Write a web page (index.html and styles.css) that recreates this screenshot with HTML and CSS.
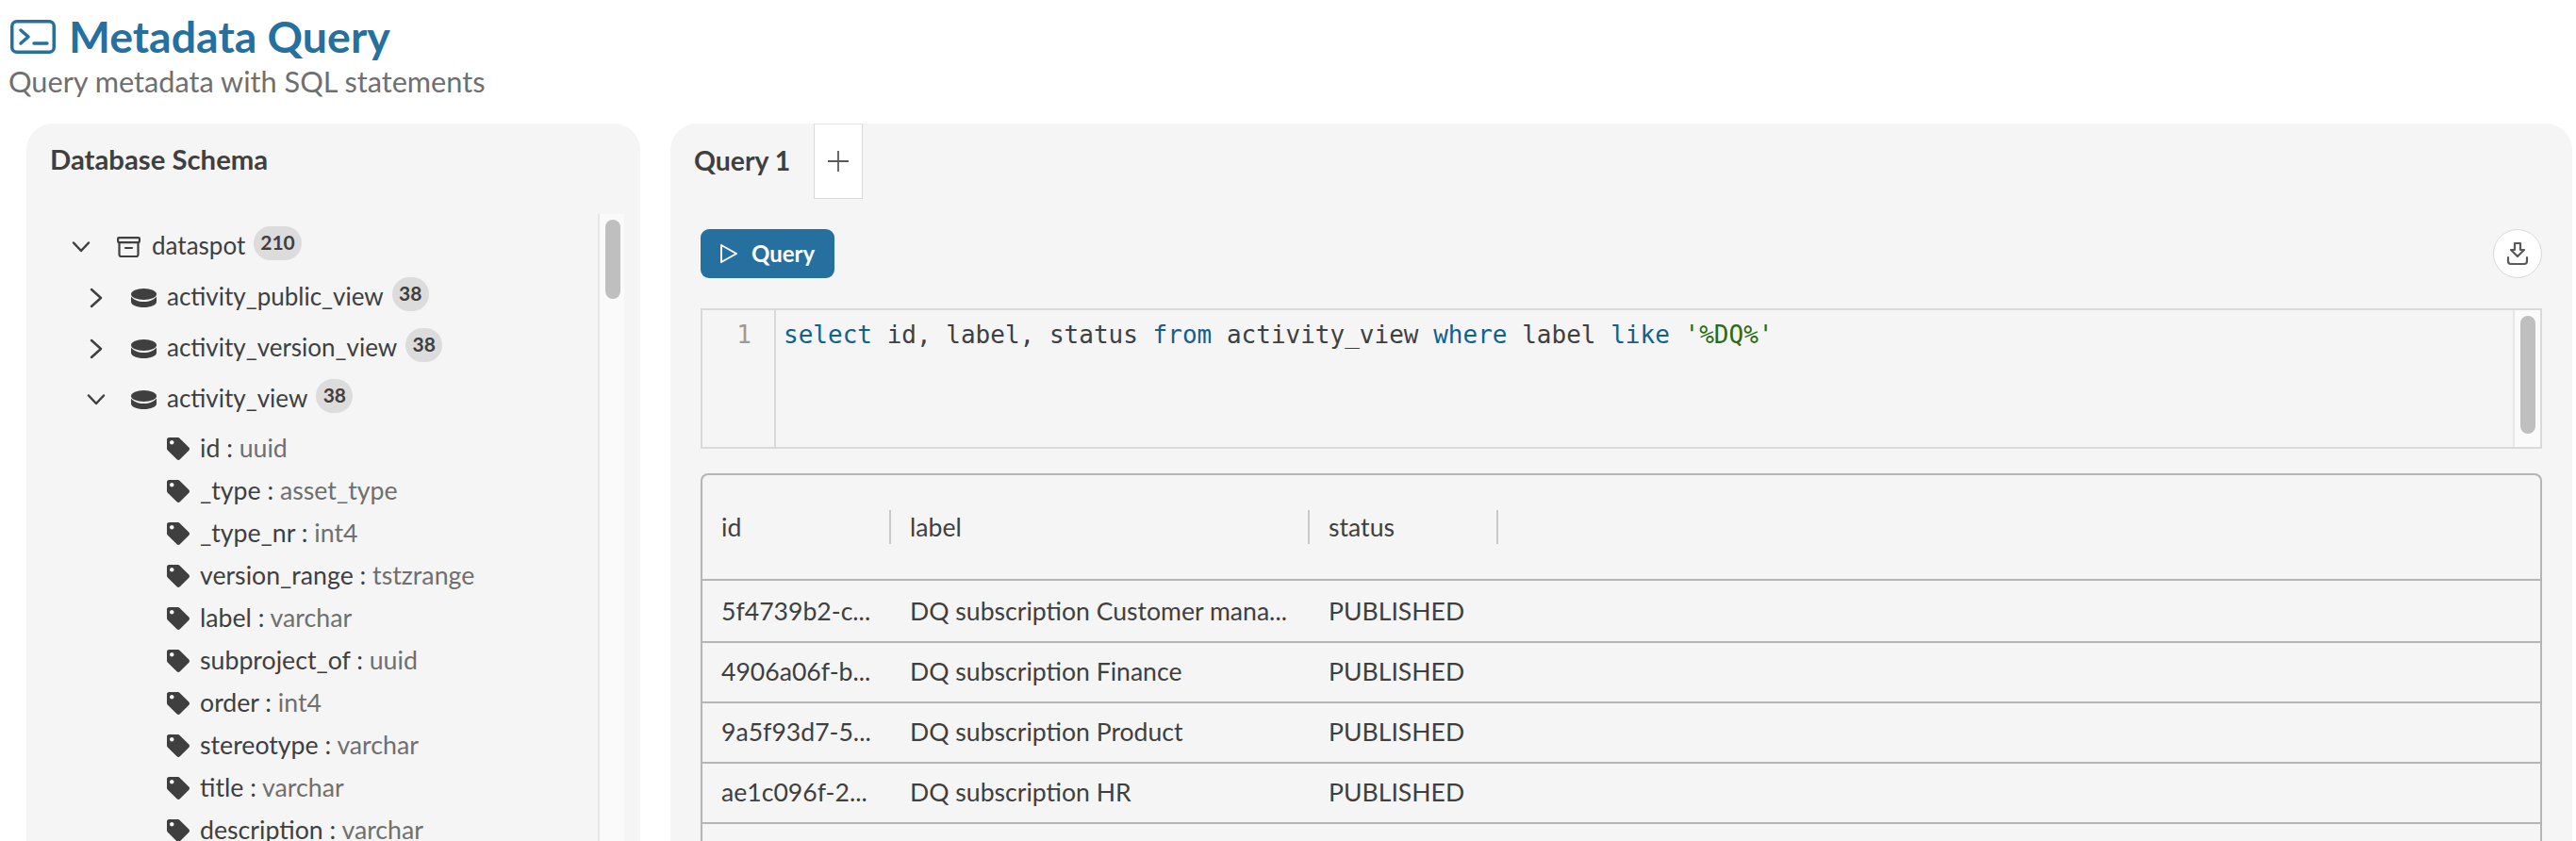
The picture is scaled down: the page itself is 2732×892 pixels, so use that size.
FILE: index.html
```html
<!DOCTYPE html>
<html lang="en">
<head>
<meta charset="utf-8">
<title>Metadata Query</title>
<link rel="stylesheet" href="styles.css">
</head>
<body>
<svg class="defs" width="0" height="0" aria-hidden="true">
  <symbol id="tag" viewBox="0 0 512 512"><path d="M0 252.118V48C0 21.49 21.49 0 48 0h204.118a48 48 0 0 1 33.941 14.059l211.882 211.882c18.745 18.745 18.745 49.137 0 67.882L293.823 497.941c-18.745 18.745-49.137 18.745-67.882 0L14.059 286.059A48 48 0 0 1 0 252.118zM112 64c-26.51 0-48 21.49-48 48s21.49 48 48 48 48-21.49 48-48-21.49-48-48-48z"/></symbol>
  <symbol id="db" viewBox="0 0 27 20"><ellipse cx="13.5" cy="6" rx="13.5" ry="6"/><path d="M0 8.5C2.5 12 7.500 14 13.500 14S24.500 12 27 8.500V14C27 17.500 21 20 13.500 20S0 17.500 0 14Z"/></symbol>
  <symbol id="right" viewBox="0 0 20 24"><path d="M5 3l10 9-10 9" fill="none" stroke="currentColor" stroke-width="2.500" stroke-linecap="round" stroke-linejoin="round"/></symbol>
  <symbol id="down" viewBox="0 0 20 20"><path d="M2 5.500l8 8.500 8-8.500" fill="none" stroke="currentColor" stroke-width="2.500" stroke-linecap="round" stroke-linejoin="round"/></symbol>
</svg>
<header class="page-head">
  <h1 class="page-title">
    <svg class="title-icon" viewBox="0 0 48 36" fill="none" stroke="currentColor" stroke-width="3.500" stroke-linecap="round" stroke-linejoin="round"><rect x="1.750" y="1.750" width="44.500" height="32.500" rx="5"/><path d="M11 11l8 7-8 7M25 25h14"/></svg>
    Metadata Query
  </h1>
  <p class="page-sub">Query metadata with SQL statements</p>
</header>
<main class="panels">
  <section class="schema">
    <h2 class="schema-title">Database Schema</h2>
    <div class="tree-wrap">
      <div class="tree">
        <div class="node">
          <svg class="chev"><use href="#down"/></svg>
          <svg class="archive" viewBox="0 0 25 22" fill="none" stroke="currentColor" stroke-width="2.200" stroke-linecap="round" stroke-linejoin="round"><rect x="1.100" y="1.100" width="22.800" height="5" rx="1"/><path d="M2.500 6.100V19a2 2 0 0 0 2 2h16a2 2 0 0 0 2-2V6.100M9 12h7"/></svg>
          <span class="node-name">dataspot</span><span class="badge">210</span>
        </div>
        <div class="node lvl1">
          <svg class="chev"><use href="#right"/></svg>
          <svg class="dbicon"><use href="#db"/></svg>
          <span class="node-name">activity_public_view</span><span class="badge">38</span>
        </div>
        <div class="node lvl1">
          <svg class="chev"><use href="#right"/></svg>
          <svg class="dbicon"><use href="#db"/></svg>
          <span class="node-name">activity_version_view</span><span class="badge">38</span>
        </div>
        <div class="node lvl1">
          <svg class="chev"><use href="#down"/></svg>
          <svg class="dbicon"><use href="#db"/></svg>
          <span class="node-name">activity_view</span><span class="badge">38</span>
        </div>
        <ul class="cols">
          <li class="col"><svg class="tag"><use href="#tag"/></svg><span>id : <em>uuid</em></span></li>
          <li class="col"><svg class="tag"><use href="#tag"/></svg><span>_type : <em>asset_type</em></span></li>
          <li class="col"><svg class="tag"><use href="#tag"/></svg><span>_type_nr : <em>int4</em></span></li>
          <li class="col"><svg class="tag"><use href="#tag"/></svg><span>version_range : <em>tstzrange</em></span></li>
          <li class="col"><svg class="tag"><use href="#tag"/></svg><span>label : <em>varchar</em></span></li>
          <li class="col"><svg class="tag"><use href="#tag"/></svg><span>subproject_of : <em>uuid</em></span></li>
          <li class="col"><svg class="tag"><use href="#tag"/></svg><span>order : <em>int4</em></span></li>
          <li class="col"><svg class="tag"><use href="#tag"/></svg><span>stereotype : <em>varchar</em></span></li>
          <li class="col"><svg class="tag"><use href="#tag"/></svg><span>title : <em>varchar</em></span></li>
          <li class="col"><svg class="tag"><use href="#tag"/></svg><span>description : <em>varchar</em></span></li>
        </ul>
      </div>
      <div class="scroll-track"><div class="scroll-thumb"></div></div>
    </div>
  </section>
  <section class="workspace">
    <div class="tabs">
      <div class="tab">Query 1</div>
      <div class="tab-add"><svg viewBox="0 0 22 22" width="22" height="22" fill="none" stroke="#595959" stroke-width="1.800"><path d="M11 0v22M0 11h22"/></svg></div>
    </div>
    <div class="body">
      <div class="toolbar">
        <button class="run"><svg viewBox="0 0 20 22" width="20" height="22" fill="none" stroke="#fff" stroke-width="2" stroke-linejoin="round"><path d="M2 2l16 9-16 9z"/></svg><span class="run-label">Query</span></button>
        <button class="dl"><svg viewBox="0 0 24 26" width="24" height="26" fill="none" stroke="#595959" stroke-width="2.200" stroke-linecap="round" stroke-linejoin="round"><path d="M9 2h6v7h4l-7 7-7-7h4zM2 17v4a3 3 0 0 0 3 3h14a3 3 0 0 0 3-3v-4"/></svg></button>
      </div>
      <div class="editor">
        <div class="gutter">1</div>
        <pre class="code"><span class="kw">select</span> id, label, status <span class="kw">from</span> activity_view <span class="kw">where</span> label <span class="kw">like</span> <span class="str">'%DQ%'</span></pre>
        <div class="ed-track"><div class="ed-thumb"></div></div>
      </div>
      <div class="results">
        <table class="grid">
          <colgroup><col class="c1"><col class="c2"><col class="c3"><col></colgroup>
          <thead><tr><th>id</th><th>label</th><th>status</th><th class="rest"></th></tr></thead>
          <tbody>
            <tr class="first"><td>5f4739b2-c...</td><td>DQ subscription Customer mana...</td><td>PUBLISHED</td><td></td></tr>
            <tr><td>4906a06f-b...</td><td>DQ subscription Finance</td><td>PUBLISHED</td><td></td></tr>
            <tr><td>9a5f93d7-5...</td><td>DQ subscription Product</td><td>PUBLISHED</td><td></td></tr>
            <tr><td>ae1c096f-2...</td><td>DQ subscription HR</td><td>PUBLISHED</td><td></td></tr>
          </tbody>
        </table>
      </div>
    </div>
  </section>
</main>
</body>
</html>
```
FILE: styles.css
```css
* { box-sizing: border-box; }
html, body { height: 892px; overflow: hidden; }
body { margin: 0; background: #fff; color: #3f3f3f; font-family: "Lato", "Noto Sans", sans-serif; }
.defs { position: absolute; }
.page-head { height: 131px; padding: 7px 0 0 9px; }
.page-title { margin: 0; display: flex; align-items: center; gap: 14px; height: 62px; font-size: 46.5px; line-height: 60px; font-weight: 700; color: #26709f; }
.title-icon { width: 48px; height: 36px; margin: 2px 0 0 2px; flex: none; }
.page-sub { margin: 0; font-size: 30.7px; line-height: 36px; color: #6f6f6f; }
.panels { display: flex; gap: 32px; padding: 0 4px 0 28px; height: 761px; }
.schema { width: 651px; flex: none; background: #f5f5f5; border-radius: 28px 28px 0 0; display: flex; flex-direction: column; }
.schema-title { margin: 0; height: 96px; padding: 21px 0 0 25px; font-size: 29.3px; line-height: 34px; font-weight: 700; color: #3f3f3f; }
.tree-wrap { display: flex; flex: 1; min-height: 0; padding-right: 17px; }
.tree { flex: 1; padding: 8px 0 0 48px; }
.scroll-track { width: 28px; flex: none; background: #fafafa; border-left: 2px solid #e6e6e6; padding: 6px 0 0 6px; }
.scroll-thumb { width: 16px; height: 84px; background: #bfbfbf; border-radius: 8px; }
.node { display: flex; height: 54px; align-items: center; font-size: 26px; }
.lvl1 { padding-left: 15px; }
.chev { width: 20px; height: 24px; margin-right: 28px; flex: none; color: #3f3f3f; }
.lvl1 .chev { transform: translateX(1px); }
.archive { width: 25px; height: 22px; margin-right: 12px; flex: none; }
.dbicon { width: 27px; height: 20px; margin-right: 11px; flex: none; fill: #3f3f3f; }
.node-name { padding-bottom: 4px; }
.badge { align-self: flex-start; margin: 5px 0 0 9px; height: 36px; min-width: 39px; padding: 0 7px; border-radius: 18px; background: #dcdcdc; font-size: 21px; font-weight: 700; line-height: 34px; text-align: center; }
.cols { list-style: none; margin: 2px 0 0; padding: 0 0 0 101px; }
.col { display: flex; align-items: center; height: 45px; font-size: 26.7px; }
.col span { padding-bottom: 1px; }
.tag { width: 24px; height: 24px; margin-right: 11px; flex: none; fill: #3f3f3f; }
.col em { font-style: normal; color: #6f6f6f; }
.workspace { flex: 1; min-width: 0; background: #f5f5f5; border-radius: 28px 28px 0 0; }
.tabs { display: flex; height: 80px; }
.tab { width: 152px; padding: 0 0 0 25px; font-size: 28.4px; font-weight: 700; line-height: 62px; height: 62px; margin-top: 8px; }
.tab-add { width: 52px; height: 80px; background: #fff; border: 1.500px solid #d9d9d9; border-top-color: #e4e4e4; display: flex; align-items: center; justify-content: center; }
.body { padding: 32px 32px 0; }
.toolbar { display: flex; justify-content: space-between; height: 52px; }
.run { width: 142px; height: 52px; background: #26709f; border: 0; border-radius: 9px; color: #fff; display: flex; align-items: center; padding: 0 0 0 20px; gap: 14px; font: 700 24px "Lato", sans-serif; }
.run-label { padding-bottom: 2px; }
.dl { width: 52px; height: 52px; border-radius: 50%; background: #fff; border: 1px solid #d9d9d9; display: flex; align-items: center; justify-content: center; padding: 0; }
.editor { display: flex; margin-top: 32px; height: 149px; border: 2px solid #d9d9d9; background: #f5f5f5; }
.gutter { width: 78px; flex: none; border-right: 2px solid #d9d9d9; font: 26px/36px "DejaVu Sans Mono", monospace; color: #9a9a9a; text-align: right; padding: 8px 24px 0 0; }
.code { margin: 0; flex: 1; padding: 8px 0 0 8px; font: 26.03px/36px "DejaVu Sans Mono", monospace; color: #3f3f3f; }
.kw { color: #0f6190; }
.str { color: #2a6a12; }
.ed-track { width: 29px; flex: none; background: #fafafa; border-left: 2px solid #e6e6e6; padding: 6px 0 0 6px; }
.ed-thumb { width: 16px; height: 125px; background: #bfbfbf; border-radius: 8px; }
.results { margin-top: 26px; height: 420px; border: 2px solid #b5b5b5; border-bottom: 0; border-radius: 8px 8px 0 0; }
.grid { width: 100%; table-layout: fixed; border-collapse: collapse; font-size: 26.6px; }
.c1 { width: 200px; }
.c2 { width: 444px; }
.c3 { width: 200px; }
.grid th { position: relative; height: 111px; padding: 0 0 0 20px; text-align: left; font-weight: 400; border-bottom: 2px solid #b5b5b5; }
.grid th:not(.rest)::after { content: ""; position: absolute; right: 0; top: 37px; height: 36px; width: 2px; background: #c9c9c9; }
.grid td { height: 64px; padding: 0 0 2px 20px; border-bottom: 2px solid #b5b5b5; white-space: nowrap; overflow: hidden; }
.grid .first td { height: 66px; padding-bottom: 0; }
```
